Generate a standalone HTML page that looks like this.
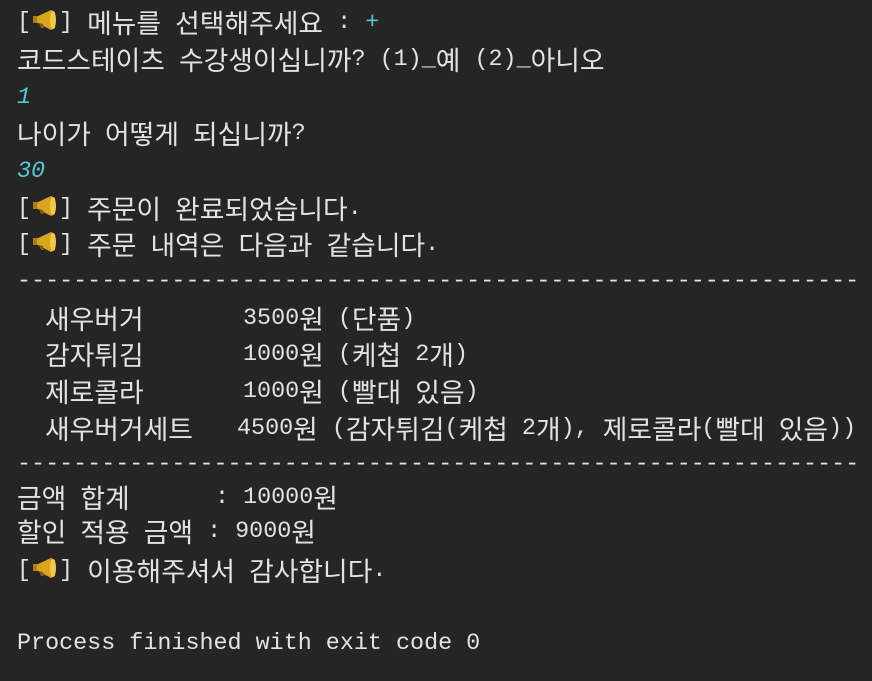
<!DOCTYPE html>
<html><head><meta charset="utf-8"><style>
body{margin:0;width:872px;height:681px;background:#252525;overflow:hidden;}
.l{position:absolute;left:17px;height:36px;line-height:36px;white-space:pre;color:#e2e2e2;font-family:"Liberation Mono","Noto Sans CJK KR",monospace;font-size:23.4px;}
.k{font-family:"Noto Sans CJK KR",sans-serif;font-size:26.8px;line-height:36px;display:inline-block;vertical-align:top;height:36px;position:relative;top:-1px;}
.c{color:#55c8d6;font-style:italic;}
.a{position:absolute;top:0;}
.e{display:inline-block;width:28px;height:24px;vertical-align:-4px;}
</style></head><body>
<div class="l" style="top:5px">[<svg class="e" viewBox="0 0 28 24"><path d="M5 9 L20 2 L24 4 L24 20 L20 22 L5 14 Z" fill="#d9a520"/><ellipse cx="22" cy="12" rx="3" ry="9" fill="#f2c94c"/><rect x="2" y="8" width="4" height="7" fill="#b07d10"/><path d="M8 15 L10 20 L13 20 L12 16" fill="#8a5c0a"/></svg>] 메뉴를 선택해주세요 : <span class="c">+</span></div>
<div class="l" style="top:42px">코드스테이츠 수강생이십니까? (1)_예 (2)_아니오</div>
<div class="l c" style="top:80px">1</div>
<div class="l" style="top:116px">나이가 어떻게 되십니까?</div>
<div class="l c" style="top:154px">30</div>
<div class="l" style="top:191px">[<svg class="e" viewBox="0 0 28 24"><path d="M5 9 L20 2 L24 4 L24 20 L20 22 L5 14 Z" fill="#d9a520"/><ellipse cx="22" cy="12" rx="3" ry="9" fill="#f2c94c"/><rect x="2" y="8" width="4" height="7" fill="#b07d10"/><path d="M8 15 L10 20 L13 20 L12 16" fill="#8a5c0a"/></svg>] 주문이 완료되었습니다.</div>
<div class="l" style="top:227px">[<svg class="e" viewBox="0 0 28 24"><path d="M5 9 L20 2 L24 4 L24 20 L20 22 L5 14 Z" fill="#d9a520"/><ellipse cx="22" cy="12" rx="3" ry="9" fill="#f2c94c"/><rect x="2" y="8" width="4" height="7" fill="#b07d10"/><path d="M8 15 L10 20 L13 20 L12 16" fill="#8a5c0a"/></svg>] 주문 내역은 다음과 같습니다.</div>
<div class="l" style="top:264px">------------------------------------------------------------</div>
<div class="l" style="top:301px"><span class="a" style="left:28px">새우버거</span><span class="a" style="left:226px">3500원 (단품)</span></div>
<div class="l" style="top:337px"><span class="a" style="left:28px">감자튀김</span><span class="a" style="left:226px">1000원 (케첩 2개)</span></div>
<div class="l" style="top:374px"><span class="a" style="left:28px">제로콜라</span><span class="a" style="left:226px">1000원 (빨대 있음)</span></div>
<div class="l" style="top:411px"><span class="a" style="left:28px">새우버거세트</span><span class="a" style="left:220px">4500원 (감자튀김(케첩 2개), 제로콜라(빨대 있음))</span></div>
<div class="l" style="top:447px">------------------------------------------------------------</div>
<div class="l" style="top:480px">금액 합계<span class="a" style="left:198px">: 10000원</span></div>
<div class="l" style="top:514px">할인 적용 금액 : 9000원</div>
<div class="l" style="top:553px">[<svg class="e" viewBox="0 0 28 24"><path d="M5 9 L20 2 L24 4 L24 20 L20 22 L5 14 Z" fill="#d9a520"/><ellipse cx="22" cy="12" rx="3" ry="9" fill="#f2c94c"/><rect x="2" y="8" width="4" height="7" fill="#b07d10"/><path d="M8 15 L10 20 L13 20 L12 16" fill="#8a5c0a"/></svg>] 이용해주셔서 감사합니다.</div>
<div class="l" style="top:626px">Process finished with exit code 0</div>
<script>
(function(){
var w=document.createTreeWalker(document.body,NodeFilter.SHOW_TEXT,null),n,a=[];
while(n=w.nextNode()){if(/[\uAC00-\uD7A3]/.test(n.nodeValue))a.push(n);}
a.forEach(function(t){
var f=document.createDocumentFragment();
t.nodeValue.split(/([\uAC00-\uD7A3]+)/).forEach(function(s){
if(!s)return;
if(/[\uAC00-\uD7A3]/.test(s)){var sp=document.createElement('span');sp.className='k';sp.textContent=s;f.appendChild(sp);}
else f.appendChild(document.createTextNode(s));
});
t.parentNode.replaceChild(f,t);
});
})();
</script>
</body></html>
